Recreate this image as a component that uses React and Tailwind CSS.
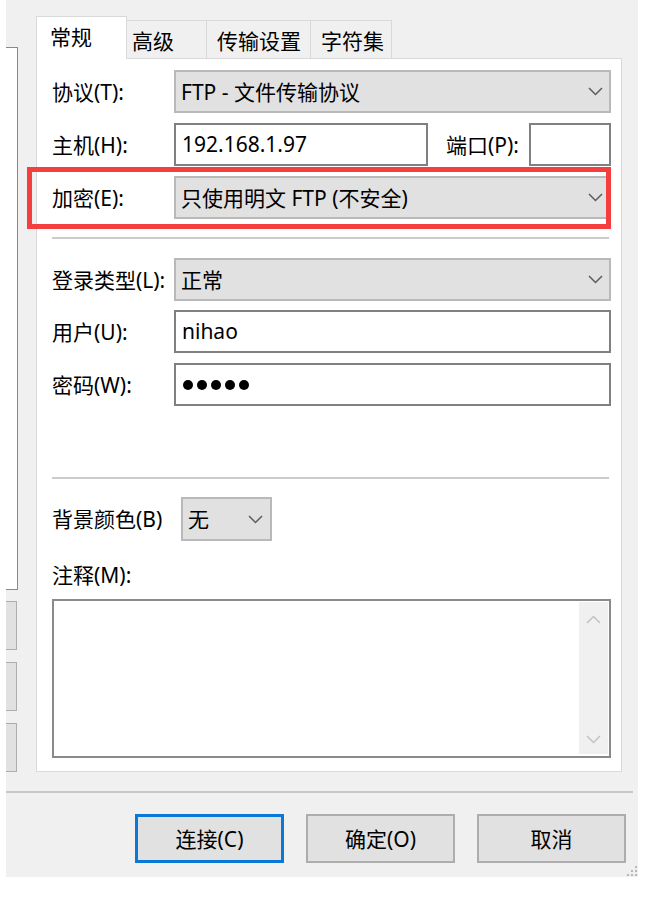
import React from "react";

function Chevron({ color = "#5c5c5c", up = false }) {
  return (
    <svg width="15" height="9" viewBox="0 0 15 9" className="shrink-0">
      <polyline
        points={up ? "1,8 7.5,1.5 14,8" : "1,1 7.5,7.5 14,1"}
        fill="none"
        stroke={color}
        strokeWidth="1.5"
      />
    </svg>
  );
}

function Select({ children, className = "" }) {
  return (
    <div
      className={
        "flex items-center h-[43px] border-2 border-[#b9b9b9] bg-[#e1e1e1] pl-[5px] pr-[6px] " +
        className
      }
    >
      <span className="flex-1 leading-[24px] whitespace-nowrap">{children}</span>
      <Chevron />
    </div>
  );
}

function Input({ children, className = "" }) {
  return (
    <div
      className={
        "flex items-center h-[43px] border-2 border-[#808080] bg-white pl-[6px] " +
        className
      }
    >
      {children}
    </div>
  );
}

function Label({ children }) {
  return <span className="w-[122px] shrink-0 leading-[24px] whitespace-nowrap">{children}</span>;
}

export default function App() {
  return (
    <div className="w-[649px] h-[903px] bg-white text-black text-[21px] font-['Noto_Sans','Noto_Sans_CJK_SC',sans-serif] overflow-hidden">
      <div className="relative ml-[6px] w-[632px] h-[877px] bg-[#f0f0f0] flex flex-col">
        <div className="flex">
          {/* left pane remnant */}
          <div className="w-[12px] shrink-0 flex flex-col">
            <div className="mt-[47px] h-[543px] w-[12px] bg-white border-t border-b border-r border-[#8a8a8a]" />
            <div className="mt-[11px] h-[49px] w-[11px] bg-[#e1e1e1] border-t border-b border-r border-[#adadad]" />
            <div className="mt-[12px] h-[49px] w-[11px] bg-[#e1e1e1] border-t border-b border-r border-[#adadad]" />
            <div className="mt-[12px] h-[49px] w-[11px] bg-[#e1e1e1] border-t border-b border-r border-[#adadad]" />
          </div>

          {/* main tab area */}
          <div className="ml-[18px] w-[586px] flex flex-col">
            <div className="flex items-end mt-[16px] -mb-px h-[43px]">
              <div className="relative z-10 w-[91px] h-[43px] bg-white border-t border-l border-r border-[#d9d9d9] pl-[13px] pt-[8px] leading-[24px]">
                常规
              </div>
              <div className="w-[80px] h-[39px] bg-[#f0f0f0] border-t border-r border-[#d9d9d9] pl-[5px] pt-[8px] leading-[24px]">
                高级
              </div>
              <div className="w-[104px] h-[39px] bg-[#f0f0f0] border-t border-r border-[#d9d9d9] pl-[10px] pt-[8px] leading-[24px]">
                传输设置
              </div>
              <div className="w-[81px] h-[39px] bg-[#f0f0f0] border-t border-r border-[#d9d9d9] pl-[10px] pt-[8px] leading-[24px]">
                字符集
              </div>
            </div>

            <div className="h-[714px] bg-white border border-[#d9d9d9] pl-[15px] pr-[10px] flex flex-col">
              <div className="flex items-center mt-[11px]">
                <Label>协议(T):</Label>
                <Select className="flex-1">FTP - 文件传输协议</Select>
              </div>

              <div className="flex items-center mt-[10px]">
                <Label>主机(H):</Label>
                <Input className="w-[254px]">192.168.1.97</Input>
                <span className="ml-[18px] w-[83px] shrink-0 leading-[24px] whitespace-nowrap">端口(P):</span>
                <Input className="w-[82px]" />
              </div>

              <div className="relative flex items-center mt-[10px]">
                <Label>加密(E):</Label>
                <Select className="flex-1">只使用明文 FTP (不安全)</Select>
                <div className="absolute left-[-25px] top-[-9px] w-[584px] h-[62px] border-[5px] border-[#f43f3f] pointer-events-none" />
              </div>

              <div className="mt-[18px] h-[2px] mr-[2px] bg-[#cbcbcb]" />

              <div className="flex items-center mt-[19px]">
                <Label>登录类型(L):</Label>
                <Select className="flex-1">正常</Select>
              </div>

              <div className="flex items-center mt-[9px]">
                <Label>用户(U):</Label>
                <Input className="flex-1">nihao</Input>
              </div>

              <div className="flex items-center mt-[10px]">
                <Label>密码(W):</Label>
                <Input className="flex-1 gap-[4px] pl-[7px]">
                  <span className="w-[10px] h-[10px] rounded-full bg-black" />
                  <span className="w-[10px] h-[10px] rounded-full bg-black" />
                  <span className="w-[10px] h-[10px] rounded-full bg-black" />
                  <span className="w-[10px] h-[10px] rounded-full bg-black" />
                  <span className="w-[10px] h-[10px] rounded-full bg-black" />
                </Input>
              </div>

              <div className="mt-[71px] h-[2px] mr-[2px] bg-[#cbcbcb]" />

              <div className="flex items-center mt-[18px]">
                <span className="w-[129px] shrink-0 leading-[24px] whitespace-nowrap">背景颜色(B)</span>
                <div className="flex items-center w-[91px] h-[44px] border-2 border-[#b9b9b9] bg-[#e1e1e1] pl-[5px] pr-[7px]">
                  <span className="flex-1 leading-[24px]">无</span>
                  <Chevron />
                </div>
              </div>

              <div className="mt-[22px] leading-[24px]">注释(M):</div>

              <div className="mt-[12px] h-[159px] border-2 border-[#8a8a8a] bg-white flex justify-end pt-[1px] pr-[1px] pb-[2px]">
                <div className="w-[29px] h-full bg-[#f0f0f0] flex flex-col items-center justify-between pt-[13px] pb-[10px]">
                  <Chevron color="#c2c2c2" up />
                  <Chevron color="#c2c2c2" />
                </div>
              </div>
            </div>
          </div>
        </div>

        <div className="mt-[19px] h-[2px] mr-[5px] bg-[#c8c8c8]" />

        <div className="flex mt-[21px] ml-[129px] gap-[22px]">
          <button className="w-[149px] h-[49px] bg-[#e1e1e1] border-[3px] border-[#0a78d7] leading-[24px]">
            连接(C)
          </button>
          <button className="w-[149px] h-[49px] bg-[#e1e1e1] border-2 border-[#adadad] leading-[24px]">
            确定(O)
          </button>
          <button className="w-[149px] h-[49px] bg-[#e1e1e1] border-2 border-[#adadad] leading-[24px]">
            取消
          </button>
        </div>

        <svg width="14" height="14" viewBox="0 0 14 14" className="absolute right-0 bottom-0">
          <rect x="11" y="11" width="2" height="2" fill="#b8b8b8" />
          <rect x="7" y="11" width="2" height="2" fill="#b8b8b8" />
          <rect x="3" y="11" width="2" height="2" fill="#b8b8b8" />
          <rect x="11" y="7" width="2" height="2" fill="#b8b8b8" />
          <rect x="7" y="7" width="2" height="2" fill="#b8b8b8" />
          <rect x="11" y="3" width="2" height="2" fill="#b8b8b8" />
        </svg>
      </div>
    </div>
  );
}
